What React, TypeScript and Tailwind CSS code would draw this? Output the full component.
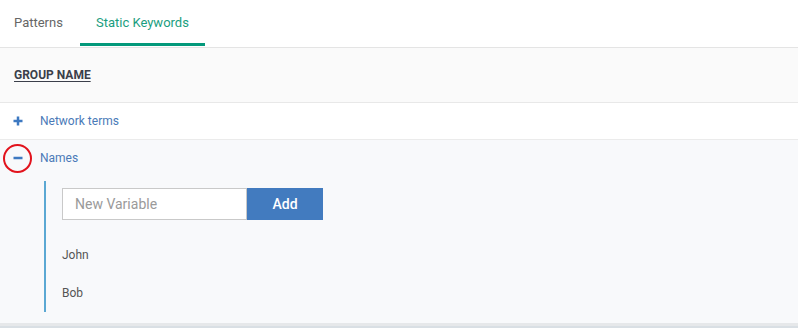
import React from "react";

export default function App() {
  return (
    <div className="w-[798px] h-[328px] bg-[#d9dfe4] overflow-hidden font-['Roboto',sans-serif]">
      <div className="bg-white">
        {/* Tabs */}
        <div className="flex h-[48px] border-b border-[#e4e4e4] bg-white">
          <div className="px-[14px] flex items-center text-[13px] text-[#666] pb-[1px]">Patterns</div>
          <div className="relative ml-[3px] w-[125px] flex items-center justify-center text-[13px] text-[#1a9e80] pb-[1px]">
            Static Keywords
            <div className="absolute left-0 right-0 bottom-[1px] h-[3px] bg-[#03997b]" />
          </div>
        </div>
        {/* Header */}
        <div className="h-[55px] bg-[#fafafa] border-b border-[#e8e8e8] flex items-center px-[14px]">
          <span className="text-[12px] font-bold text-[#3b3f4a] underline underline-offset-2">GROUP NAME</span>
        </div>
        {/* Network terms */}
        <div className="h-[37px] bg-white border-b border-[#ebebeb] flex items-center">
          <div className="w-[40px] flex justify-start pl-[13px]">
            <svg width="10" height="10" viewBox="0 0 10 10">
              <rect x="3.75" y="0.5" width="2.5" height="9" fill="#3d79c1" />
              <rect x="0.5" y="3.75" width="9" height="2.5" fill="#3d79c1" />
            </svg>
          </div>
          <span className="text-[12px] text-[#4a7ab8]">Network terms</span>
        </div>
        {/* Names */}
        <div className="bg-[#f8f9fb] border-b-[3px] border-[#e6e8ea]">
          <div className="relative h-[36px] flex items-center">
            <div className="w-[40px] flex justify-start pl-[13px]">
              <svg width="10" height="10" viewBox="0 0 10 10">
                <rect x="0.5" y="3.75" width="9" height="2.5" fill="#3d79c1" />
              </svg>
            </div>
            <span className="text-[12px] text-[#4a7ab8]">Names</span>
            <div className="absolute left-[3px] top-[4px] w-[29px] h-[29px] rounded-full border-[2px] border-[#e2131d]" />
          </div>
          <div className="ml-[44px] mt-[5px] mb-[11px] border-l-[2px] border-[#5ba8d3] pl-[16px] pt-[7px]">
            <div className="flex">
              <input
                placeholder="New Variable"
                className="w-[185px] h-[32px] border border-[#c9c9c9] bg-white px-[12px] text-[14px] text-[#333] placeholder-[#9a9a9a] outline-none"
              />
              <button className="w-[76px] h-[32px] bg-[#427bbf] text-white text-[14px] font-medium">Add</button>
            </div>
            <div className="h-[39px] mt-[15px] flex items-center text-[12px] text-[#555]">John</div>
            <div className="h-[38px] flex items-center text-[12px] text-[#555]">Bob</div>
          </div>
        </div>
      </div>
    </div>
  );
}
